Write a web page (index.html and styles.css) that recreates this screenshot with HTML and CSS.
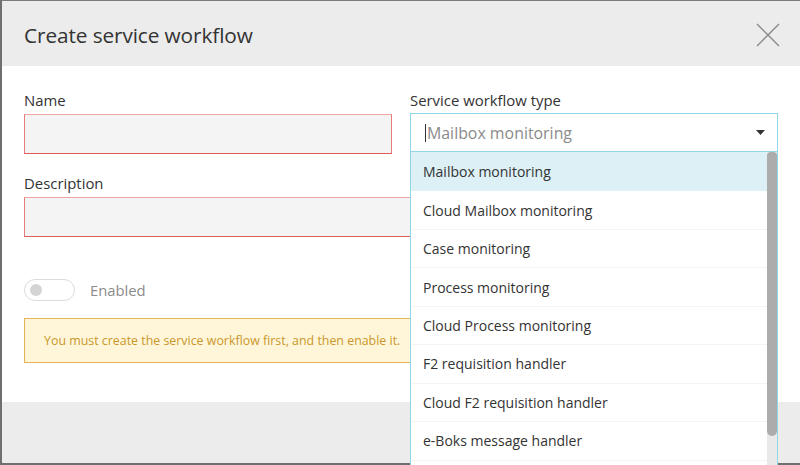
FILE: index.html
```html
<!DOCTYPE html>
<html>
<head>
<meta charset="utf-8">
<link rel="stylesheet" href="styles.css">
</head>
<body>
<div class="dialog">
  <div class="header">
    <h1 class="title">Create service workflow</h1>
    <svg class="close" width="24" height="24" viewBox="0 0 24 24"><path d="M1 1 L23 23 M23 1 L1 23" stroke="#8a8a8a" stroke-width="1.4" fill="none"/></svg>
  </div>
  <div class="content">
    <div class="row">
      <div class="field">
        <label class="label">Name</label>
        <div class="input invalid"></div>
      </div>
      <div class="field type-field">
        <label class="label">Service workflow type</label>
        <div class="select">
          <span class="cursor"></span><span class="placeholder">Mailbox monitoring</span>
          <svg class="caret" width="9" height="5" viewBox="0 0 9 5"><path d="M0 0 H9 L4.5 5 Z" fill="#333"/></svg>
        </div>
        <div class="dropdown">
          <div class="options">
            <div class="option active">Mailbox monitoring</div>
            <div class="option">Cloud Mailbox monitoring</div>
            <div class="option">Case monitoring</div>
            <div class="option">Process monitoring</div>
            <div class="option">Cloud Process monitoring</div>
            <div class="option">F2 requisition handler</div>
            <div class="option">Cloud F2 requisition handler</div>
            <div class="option">e-Boks message handler</div>
          </div>
          <div class="scrollbar"><div class="thumb"></div></div>
        </div>
      </div>
    </div>
    <div class="field desc-field">
      <label class="label">Description</label>
      <div class="input invalid"></div>
    </div>
    <div class="toggle-row">
      <span class="toggle"><span class="knob"></span></span>
      <span class="toggle-label">Enabled</span>
    </div>
    <div class="warning">You must create the service workflow first, and then enable it.</div>
  </div>
  <div class="footer"></div>
</div>
</body>
</html>
```
FILE: styles.css
```css
html, body {
  margin: 0;
  padding: 0;
  width: 800px;
  height: 465px;
  overflow: hidden;
  background: #fff;
}
body {
  font-family: "Open Sans", "Noto Sans", sans-serif;
  color: #333;
}
.dialog {
  box-sizing: border-box;
  width: 800px;
  height: 465px;
  border-left: 2px solid #6f6f6f;
  border-top: 1px solid #7a7a7a;
  border-bottom: 2px solid #6f6f6f;
  display: flex;
  flex-direction: column;
  background: #fff;
}
.header {
  height: 65px;
  flex: none;
  background: #ececec;
  display: flex;
  align-items: center;
  justify-content: space-between;
  padding: 0 20px 0 22px;
}
.title {
  margin: 0;
  font-weight: 400;
  font-size: 20.8px;
  color: #333;
  letter-spacing: -0.1px;
  position: relative;
  top: 1px;
}
.close {
  display: block;
  position: relative;
  top: 1px;
}
.content {
  flex: 1;
  padding: 24px 22px 0 22px;
  position: relative;
}
.row {
  display: flex;
  gap: 18px;
}
.field {
  flex: 1;
  display: flex;
  flex-direction: column;
}
.type-field {
  position: relative;
}
.label {
  font-size: 14.9px;
  line-height: 20px;
  color: #333;
  height: 24px;
}
.input {
  box-sizing: border-box;
  height: 40px;
  background: #f3f4f3;
  border: 1px solid #e87a7a;
  border-top-color: #f0a4a4;
}
.input.invalid {
  border-bottom-color: #e25b5b;
}
.select {
  box-sizing: border-box;
  height: 39px;
  margin-top: -1px;
  border: 1px solid #93d5e8;
  background: #fff;
  display: flex;
  align-items: center;
  padding: 0 12px 0 14px;
  font-size: 15.9px;
  color: #8a8a8a;
}
.cursor {
  width: 1px;
  height: 18px;
  background: #333;
  margin-right: 1px;
}
.placeholder {
  flex: 1;
}
.caret {
  display: block;
}
.dropdown {
  position: absolute;
  left: 0;
  right: 0;
  top: 62px;
  box-sizing: border-box;
  border-left: 1px solid #93d5e8;
  border-right: 1px solid #93d5e8;
  background: #fff;
  display: flex;
  height: 330px;
  z-index: 5;
}
.options {
  flex: 1;
  padding-top: 1px;
}
.option {
  box-sizing: border-box;
  height: 38.45px;
  display: flex;
  align-items: center;
  padding-left: 12px;
  font-size: 14px;
  color: #333;
  border-bottom: 1px solid #f4f4f4;
}
.option.active {
  background: #dcf0f6;
  border-bottom-color: #dcf0f6;
  margin-top: -1px;
  height: 39.45px;
}
.scrollbar {
  width: 10px;
  flex: none;
  background: #e9e9e9;
}
.thumb {
  height: 284px;
  background: #acacac;
  border-radius: 0 0 5px 5px;
  border-top-left-radius: 4px;
  border-top-right-radius: 4px;
}
.desc-field {
  margin-top: 19px;
}
.desc-field .label {
  height: 24px;
}
.toggle-row {
  display: flex;
  align-items: center;
  margin-top: 42px;
  height: 22px;
}
.toggle {
  box-sizing: border-box;
  width: 51px;
  height: 22px;
  border: 1px solid #dcdcdc;
  border-radius: 11px;
  display: flex;
  align-items: center;
  padding-left: 5px;
}
.knob {
  width: 12px;
  height: 12px;
  border-radius: 50%;
  background: #d4d4d4;
}
.toggle-label {
  margin-left: 15px;
  font-size: 14.8px;
  color: #8c8c8c;
}
.warning {
  box-sizing: border-box;
  margin-top: 17px;
  height: 45px;
  background: #fff6d9;
  border: 1px solid #e3b557;
  display: flex;
  align-items: center;
  padding-left: 19px;
  font-size: 12.4px;
  color: #c9972a;
}
.footer {
  height: 61px;
  flex: none;
  background: #ececec;
}
```
